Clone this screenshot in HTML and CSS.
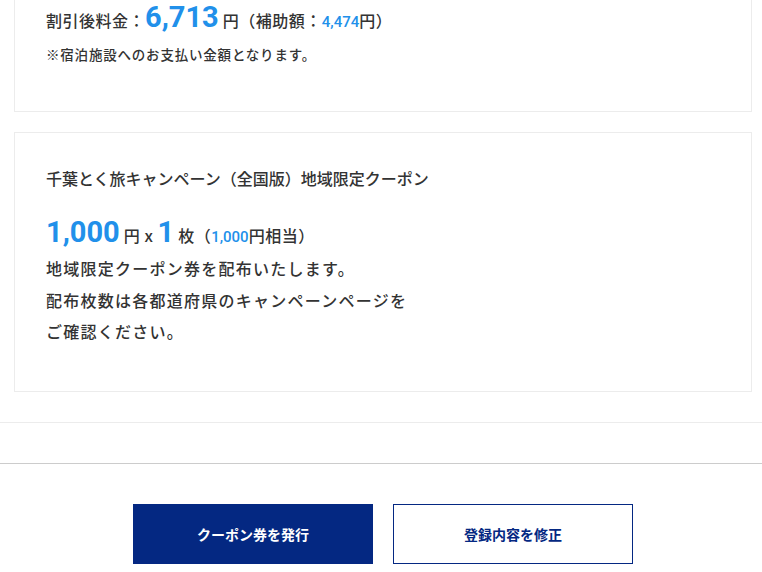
FILE: index.html
```html
<!DOCTYPE html>
<html lang="ja">
<head>
    <meta charset="UTF-8">
    <meta name="viewport" content="width=device-width, initial-scale=1.0">
    <title>クーポン券発行</title>
    <link rel="stylesheet" href="styles.css">
</head>
<body>

    <div class="content">
        <div class="card card-price">
            <p class="price-row">
                割引後料金：<span class="num-big">6,713</span> 円（補助額：<span class="num-small">4,474</span>円）
            </p>
            <p class="note">※宿泊施設へのお支払い金額となります。</p>
        </div>

        <div class="card">
            <h2 class="coupon-title">千葉とく旅キャンペーン（全国版）地域限定クーポン</h2>
            <p class="price-row coupon-row">
                <span class="num-big">1,000</span> 円 x <span class="num-big">1</span> 枚（<span class="num-small">1,000</span>円相当）
            </p>
            <p class="desc">
                地域限定クーポン券を配布いたします。<br>
                配布枚数は各都道府県のキャンペーンページを<br>
                ご確認ください。
            </p>
        </div>
    </div>

    <div class="actions">
        <button type="button" class="btn btn-primary">クーポン券を発行</button>
        <button type="button" class="btn btn-outline">登録内容を修正</button>
    </div>

</body>
</html>
```

FILE: styles.css
```css
body {
    font-family: "Noto Sans CJK JP", sans-serif;
    color: #333;
    margin: 0;
    padding: 0;
    background: #fff;
}
p, h2 {
    margin: 0;
}
.content {
    padding: 0 10px 30px 14px;
    border-bottom: 1px solid #ececec;
    margin-bottom: 40px;
}
.card {
    border: 1px solid #ececec;
    padding: 29px 30px 30px 31px;
    margin-bottom: 20px;
}
.card:last-child {
    margin-bottom: 0;
}
.card-price {
    margin-top: -50px;
    padding-top: 52px;
    padding-bottom: 47px;
}
.price-row {
    font-size: 16px;
    font-weight: 500;
    line-height: 32px;
    letter-spacing: 0.5px;
}
.num-big {
    font-family: Roboto, "Noto Sans CJK JP", sans-serif;
    font-size: 29px;
    font-weight: bold;
    line-height: 1;
    color: #2190ea;
    letter-spacing: 0;
}
.num-small {
    font-family: Roboto, "Noto Sans CJK JP", sans-serif;
    font-size: 15px;
    font-weight: 500;
    line-height: 1;
    color: #2190ea;
    letter-spacing: 0;
}
.note {
    font-size: 13.5px;
    font-weight: 500;
    letter-spacing: 0.8px;
    margin-top: 8px;
    line-height: 20px;
}
.coupon-title {
    font-size: 16px;
    font-weight: 500;
    line-height: 32px;
}
.coupon-row {
    margin-top: 24px;
    line-height: 34px;
}
.desc {
    font-size: 16px;
    font-weight: 500;
    line-height: 31.5px;
    letter-spacing: 1.25px;
    margin-top: 1px;
    padding-bottom: 13px;
}
.actions {
    border-top: 1px solid #ccc;
    padding: 40px 10px 40px 14px;
    display: flex;
    justify-content: center;
    gap: 20px;
}
.btn {
    width: 240px;
    height: 60px;
    font-family: "Noto Sans CJK JP", sans-serif;
    font-size: 14px;
    font-weight: bold;
    cursor: pointer;
}
.btn-primary {
    background-color: #042882;
    color: #fff;
    border: none;
}
.btn-outline {
    background-color: #fff;
    color: #042882;
    border: 1px solid #042882;
}
```
